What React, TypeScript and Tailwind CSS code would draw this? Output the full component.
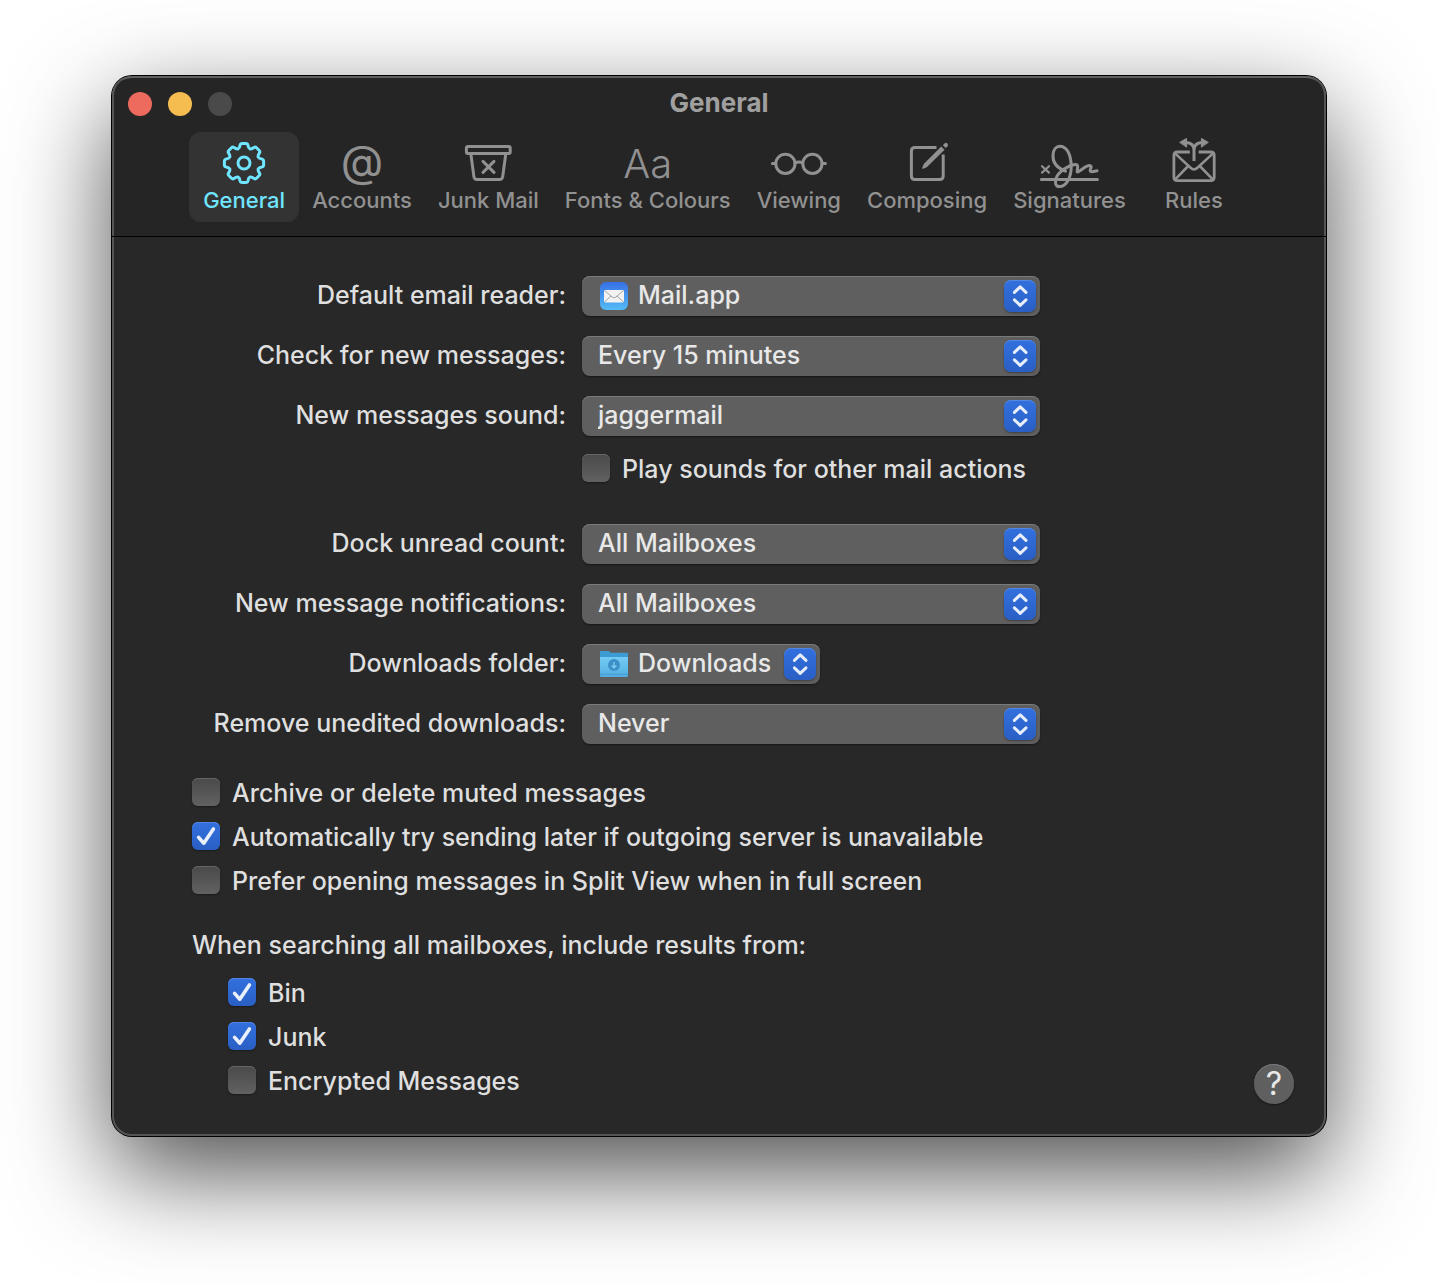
import { useState } from "react";
import type { ReactNode } from "react";
import clsx from "clsx";

interface Tab {
  label: string;
  icon: ReactNode;
}

interface PopupProps {
  id: string;
  label: string;
  options: string[];
  icon?: ReactNode;
  className?: string;
}

interface CheckboxProps {
  label: string;
  checked?: boolean;
}

// One cog tooth pointing up, repeated eight times around the centre
const TOOTH: [number, number][] = [
  [-5.9, -14.2],
  [-4.3, -15],
  [-3.9, -18],
  [-3.5, -19.6],
  [-1.9, -19.6],
  [1.9, -19.6],
  [3.5, -19.6],
  [3.9, -18],
  [4.3, -15],
];

const gearPath = () => {
  let d = "";
  for (let i = 0; i < 8; i++) {
    const a = (i * Math.PI) / 4;
    const p = TOOTH.map(
      ([x, y]) =>
        `${(30 + x * Math.cos(a) - y * Math.sin(a)).toFixed(2)} ${(25 + x * Math.sin(a) + y * Math.cos(a)).toFixed(2)}`
    );
    d += `${i === 0 ? "M" : "L"}${p[0]} Q${p[1]} ${p[2]} Q${p[3]} ${p[4]} L${p[5]} Q${p[6]} ${p[7]} Q${p[8]} `;
    // end of the last curve is the next tooth's first point
    const b = a + Math.PI / 4;
    const [x, y] = TOOTH[0];
    d += `${(30 + x * Math.cos(b) - y * Math.sin(b)).toFixed(2)} ${(25 + x * Math.sin(b) + y * Math.cos(b)).toFixed(2)} `;
  }
  return d + "Z";
};

const ToolbarIcon = ({ children }: { children: ReactNode }) => (
  <svg
    className="w-[60px] h-[50px] overflow-visible"
    viewBox="0 0 60 50"
    fill="none"
    stroke="currentColor"
    strokeWidth={3}
    strokeLinecap="round"
    strokeLinejoin="round"
    aria-hidden="true"
  >
    {children}
  </svg>
);

const GlyphIcon = ({ children, className }: { children: string; className: string }) => (
  <span aria-hidden="true" className={clsx("h-[50px] flex items-center justify-center leading-none", className)}>
    {children}
  </span>
);

const tabs: Tab[] = [
  {
    label: "General",
    icon: (
      <ToolbarIcon>
        <path d={gearPath()} />
        <circle cx="30" cy="25" r="6" />
      </ToolbarIcon>
    ),
  },
  { label: "Accounts", icon: <GlyphIcon className="text-[44px] font-normal pb-1">@</GlyphIcon> },
  {
    label: "Junk Mail",
    icon: (
      <ToolbarIcon>
        <rect x="8.4" y="8.4" width="43.8" height="7.2" rx="1.5" />
        <path d="M13 17 L15.9 38.6 Q16.3 41.5 19.2 41.5 H41.4 Q44.3 41.5 44.7 38.6 L47.6 17" />
        <path d="M25 23.4 L36 34.4 M36 23.4 L25 34.4" />
      </ToolbarIcon>
    ),
  },
  { label: "Fonts & Colours", icon: <GlyphIcon className="text-[40px] font-light pt-[2px]">Aa</GlyphIcon> },
  {
    label: "Viewing",
    icon: (
      <ToolbarIcon>
        <circle cx="16.4" cy="25.8" r="9.6" />
        <circle cx="43.4" cy="25.8" r="9.6" />
        <path d="M26 24.8 Q29.9 23.4 33.8 24.8 M3.4 25.4 H6.6 M53.2 25.4 H56.4" />
      </ToolbarIcon>
    ),
  },
  {
    label: "Composing",
    icon: (
      <ToolbarIcon>
        <path
          strokeLinecap="butt"
          d="M39.5 9.6 H18 Q14.4 9.6 14.4 13.2 V38 Q14.4 41.6 18 41.6 H42.6 Q46.2 41.6 46.2 38 V16.5"
        />
        <path
          fill="currentColor"
          stroke="none"
          d="M44.2 8.4 L47.6 11.8 L30 29.1 Q28.4 30.1 26 30.8 Q25 30.9 25.2 29.9 Q25.9 27.6 27 25.7 Z"
        />
        <path
          fill="currentColor"
          stroke="none"
          d="M45.8 7.2 L47.6 5.4 Q49 4.2 50.3 5.5 Q51.7 7 50.5 8.3 L48.8 10.1 Z"
        />
      </ToolbarIcon>
    ),
  },
  {
    label: "Signatures",
    icon: (
      <ToolbarIcon>
        <path strokeWidth={2.2} d="M3 28.2 L10 34.6 M10 28.2 L3 34.6" />
        <path d="M2.4 41.5 H58.4" />
        <path d="M26.5 33.2 C18 30 13.6 24 14 17 C14.3 11.4 17.4 8 21.3 8.2 C28.5 8.5 32 18 32.2 28 C32.4 39 27.5 48.8 20.3 48.6 C16.5 48.4 15.6 44.4 17 40.4 C19.5 33.5 29 27.5 36 26.6 C40.4 26.2 38 30.6 38.2 34 C42 33.4 46.4 27.2 51 27.6 C54.2 28.2 49.8 32 51.6 33.4 C53.2 34.3 56 33 58 32.8" />
      </ToolbarIcon>
    ),
  },
  {
    label: "Rules",
    icon: (
      <ToolbarIcon>
        <path
          strokeLinecap="butt"
          strokeWidth={2.8}
          d="M25.8 14 H13.4 Q9.9 14 9.9 17.4 V39.2 Q9.9 42.6 13.4 42.6 H46.8 Q50.2 42.6 50.2 39.2 V17.4 Q50.2 14 46.8 14 H34.6"
        />
        <path strokeWidth={2.6} d="M11 15.4 L26.5 29.8 Q30 33 33.5 29.8 L49 15.4 M11 41.6 L24.2 28 M49 41.6 L35.8 28" />
        <path strokeLinecap="butt" d="M30 23 V12 Q30 4.8 22 4.4 M30 12 Q30 4.8 38 4.4" />
        <path fill="currentColor" strokeWidth={1} d="M16 4.2 L22.6 0.4 V8.8 Z M44 4.2 L37.4 0.4 V8.8 Z" />
      </ToolbarIcon>
    ),
  },
];

const MailIcon = () => (
  <svg className="w-7 h-7" viewBox="0 0 28 28" aria-hidden="true">
    <defs>
      <linearGradient id="mail-bg" x1="0" y1="0" x2="0" y2="1">
        <stop offset="0" stopColor="#3770e6" />
        <stop offset="1" stopColor="#54bcf6" />
      </linearGradient>
    </defs>
    <rect width="28" height="28" rx="6" fill="url(#mail-bg)" />
    <rect x="4" y="8" width="20" height="12.4" rx="1.4" fill="#f2f2f2" />
    <path
      d="M4.6 8.6 L12.4 15.2 Q14 16.4 15.6 15.2 L23.4 8.6 M4.6 19.8 L11 14 M23.4 19.8 L17 14"
      fill="none"
      stroke="#9a9a9a"
      strokeWidth="0.9"
    />
  </svg>
);

const FolderIcon = () => (
  <svg className="w-7 h-7" viewBox="0 0 28 28" aria-hidden="true">
    <defs>
      <linearGradient id="folder-bg" x1="0" y1="0" x2="0" y2="1">
        <stop offset="0" stopColor="#74cbf4" />
        <stop offset="1" stopColor="#52aee2" />
      </linearGradient>
    </defs>
    <path d="M0 2.2 Q0 1 1.2 1 H8 Q9 1 9.8 1.8 L11 2.8 H26.8 Q28 2.8 28 4 V12 H0 Z" fill="#3d9bd3" />
    <path d="M0 7 H28 V25.8 Q28 27 26.8 27 H1.2 Q0 27 0 25.8 Z" fill="url(#folder-bg)" />
    <path d="M0 24.2 H28" stroke="#4398cc" strokeWidth="0.8" />
    <circle cx="14" cy="15" r="6" fill="#3d8fc8" />
    <path d="M14 12 V17.6 M11.7 15.5 L14 17.8 L16.3 15.5" fill="none" stroke="#7fcdf4" strokeWidth="1.3" />
  </svg>
);

const Popup = ({ id, label, options, icon, className }: PopupProps) => (
  <>
    <label htmlFor={id} className="text-right leading-[38px] whitespace-nowrap">
      {label}
    </label>
    <div className={clsx("relative h-10", className)}>
      <select
        id={id}
        className={clsx(
          "block w-full h-10 pr-9 appearance-none rounded-lg bg-[#5f5f5f] text-[#e8e8e8] outline-none",
          "shadow-[inset_0_1px_0_#7a7a7a,0_1px_2px_rgba(0,0,0,0.45)]",
          icon ? "pl-14" : "pl-4"
        )}
      >
        {options.map((option) => (
          <option key={option}>{option}</option>
        ))}
      </select>
      {icon && <span className="absolute left-[18px] top-[6px] pointer-events-none">{icon}</span>}
      <span className="absolute right-1 top-1 size-8 rounded-[7px] pointer-events-none bg-linear-to-b from-[#3270de] to-[#2a5fc4] shadow-[inset_0_1px_0_#5287e3,0_1px_2px_rgba(0,0,0,0.35)]">
        <svg
          viewBox="0 0 32 32"
          fill="none"
          stroke="#e6edfb"
          strokeWidth="3"
          strokeLinecap="round"
          strokeLinejoin="round"
          aria-hidden="true"
        >
          <path d="M10.4 12.4 L16.2 6.8 L22 12.4 M10.4 19.8 L16.2 25.4 L22 19.8" />
        </svg>
      </span>
    </div>
  </>
);

const Checkbox = ({ label, checked = false }: CheckboxProps) => {
  const [on, setOn] = useState(checked);

  return (
    <label className="flex items-center gap-3 h-7 whitespace-nowrap">
      <span className="relative size-7 shrink-0">
        <input
          type="checkbox"
          checked={on}
          onChange={() => setOn(!on)}
          className={clsx(
            "block size-7 appearance-none rounded-md bg-linear-to-b",
            on
              ? "from-[#3270de] to-[#2a5fc4] shadow-[inset_0_1px_0_#5287e3,0_1px_2px_rgba(0,0,0,0.35)]"
              : "from-[#4a4a4a] to-[#616161] shadow-[inset_0_1px_0_#666666,0_1px_2px_rgba(0,0,0,0.35)]"
          )}
        />
        {on && (
          <svg
            className="absolute inset-0 pointer-events-none"
            viewBox="0 0 28 28"
            fill="none"
            stroke="#e9effb"
            strokeWidth="3.6"
            strokeLinecap="round"
            strokeLinejoin="round"
            aria-hidden="true"
          >
            <path d="M6.6 15.4 L11.8 21.2 L21.4 7" />
          </svg>
        )}
      </span>
      <span className="pt-[2px] leading-8">{label}</span>
    </label>
  );
};

export default function App() {
  const [activeTab, setActiveTab] = useState("General");

  return (
    <main className="min-h-screen bg-white px-28 pt-[76px] pb-[148px] font-['Inter',sans-serif]">
      <div className="relative rounded-[20px] bg-[#282828] text-[25px] font-medium text-[#dfdfdf] shadow-[inset_0_0_0_2px_#555555,0_0_0_1px_#000000,0_36px_100px_rgba(0,0,0,0.7)]">
        <header className="border-b border-black rounded-t-[20px] bg-[#252525] pb-[14px] shadow-[inset_2px_0_0_#555555,inset_-2px_0_0_#555555,inset_0_2px_0_#606060]">
          <div className="grid grid-cols-[1fr_auto_1fr] items-center h-14 px-4">
            <div className="flex gap-4">
              <button aria-label="Close" className="size-6 rounded-full bg-[#ed6a5e]" />
              <button aria-label="Minimise" className="size-6 rounded-full bg-[#f5bd4f]" />
              <button aria-label="Zoom" disabled className="size-6 rounded-full bg-[#4a4a4a]" />
            </div>
            <h1 className="pb-[2px] text-[26px] leading-8 font-bold text-[#a0a0a0]">General</h1>
          </div>
          <nav className="flex justify-center">
            {tabs.map(({ label, icon }) => (
              <button
                key={label}
                onClick={() => setActiveTab(label)}
                className={clsx(
                  "flex flex-col items-center min-w-[110px] px-[13px] pt-[6px] pb-[10px] rounded-xl text-[22px] leading-6 font-medium whitespace-nowrap",
                  activeTab === label ? "bg-[#333333] text-[#70e5ff]" : "text-[#919191]"
                )}
              >
                {icon}
                <span>{label}</span>
              </button>
            ))}
          </nav>
        </header>

        <form className="pt-[39px] pb-[42px] pl-20 pr-8" onSubmit={(e) => e.preventDefault()}>
          <div className="grid grid-cols-[374px_458px] gap-x-4 gap-y-5">
            <Popup id="reader" label="Default email reader:" options={["Mail.app"]} icon={<MailIcon />} />
            <Popup
              id="check"
              label="Check for new messages:"
              options={["Every 15 minutes", "Every 30 minutes", "Every hour", "Manually"]}
            />
            <Popup id="sound" label="New messages sound:" options={["jaggermail", "None"]} />
          </div>
          <div className="mt-[18px] mb-[42px] pl-[390px]">
            <Checkbox label="Play sounds for other mail actions" />
          </div>
          <div className="grid grid-cols-[374px_458px] gap-x-4 gap-y-5">
            <Popup id="dock" label="Dock unread count:" options={["All Mailboxes", "Inbox Only"]} />
            <Popup id="notifications" label="New message notifications:" options={["All Mailboxes", "Inbox Only"]} />
            <Popup
              id="downloads"
              label="Downloads folder:"
              options={["Downloads"]}
              icon={<FolderIcon />}
              className="w-[238px]"
            />
            <Popup
              id="remove"
              label="Remove unedited downloads:"
              options={["Never", "When Mail Quits", "After Message is Deleted"]}
            />
          </div>

          <div className="mt-[34px] flex flex-col items-start gap-4">
            <Checkbox label="Archive or delete muted messages" />
            <Checkbox label="Automatically try sending later if outgoing server is unavailable" checked />
            <Checkbox label="Prefer opening messages in Split View when in full screen" />
          </div>

          <fieldset className="mt-9">
            <legend className="leading-[30px]">When searching all mailboxes, include results from:</legend>
            <div className="mt-[18px] pl-9 flex flex-col items-start gap-4">
              <Checkbox label="Bin" checked />
              <Checkbox label="Junk" checked />
              <Checkbox label="Encrypted Messages" />
            </div>
          </fieldset>
        </form>

        <button
          aria-label="Help"
          className="absolute right-8 bottom-8 size-10 rounded-full bg-[#5f5f5f] text-[32px] leading-none font-normal text-[#e8e8e8] shadow-[inset_0_1px_0_#7a7a7a,0_1px_2px_rgba(0,0,0,0.45)]"
        >
          ?
        </button>
      </div>
    </main>
  );
}
